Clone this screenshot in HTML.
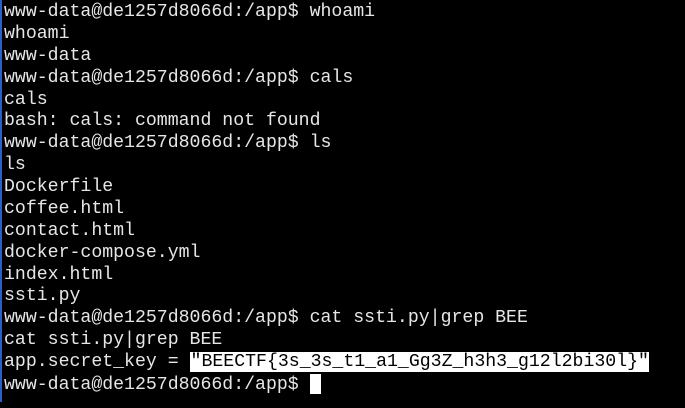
<!DOCTYPE html>
<html><head><style>
html,body{margin:0;padding:0;background:#000;width:685px;height:408px;overflow:hidden}
.b{position:absolute;left:0;top:0;width:2px;height:402px;background:#2a5fc8}
pre{position:absolute;left:4px;top:2px;margin:0;font-family:"Liberation Mono",monospace;font-size:18.2px;line-height:21.88px;color:#e6e6e6;white-space:pre}
.h{background:#fff;color:#000;padding:0 0 0 1px}
.c{display:inline-block;width:11px;height:20px;background:#fff;vertical-align:-5px}
</style></head><body><div class="b"></div><pre>www-data@de1257d8066d:/app$ whoami
whoami
www-data
www-data@de1257d8066d:/app$ cals
cals
bash: cals: command not found
www-data@de1257d8066d:/app$ ls
ls
Dockerfile
coffee.html
contact.html
docker-compose.yml
index.html
ssti.py
www-data@de1257d8066d:/app$ cat ssti.py|grep BEE
cat ssti.py|grep BEE
app.secret_key = <span class="h">"BEECTF{3s_3s_t1_a1_Gg3Z_h3h3_g12l2bi30l}"</span>
www-data@de1257d8066d:/app$ <span class="c"></span></pre></body></html>
